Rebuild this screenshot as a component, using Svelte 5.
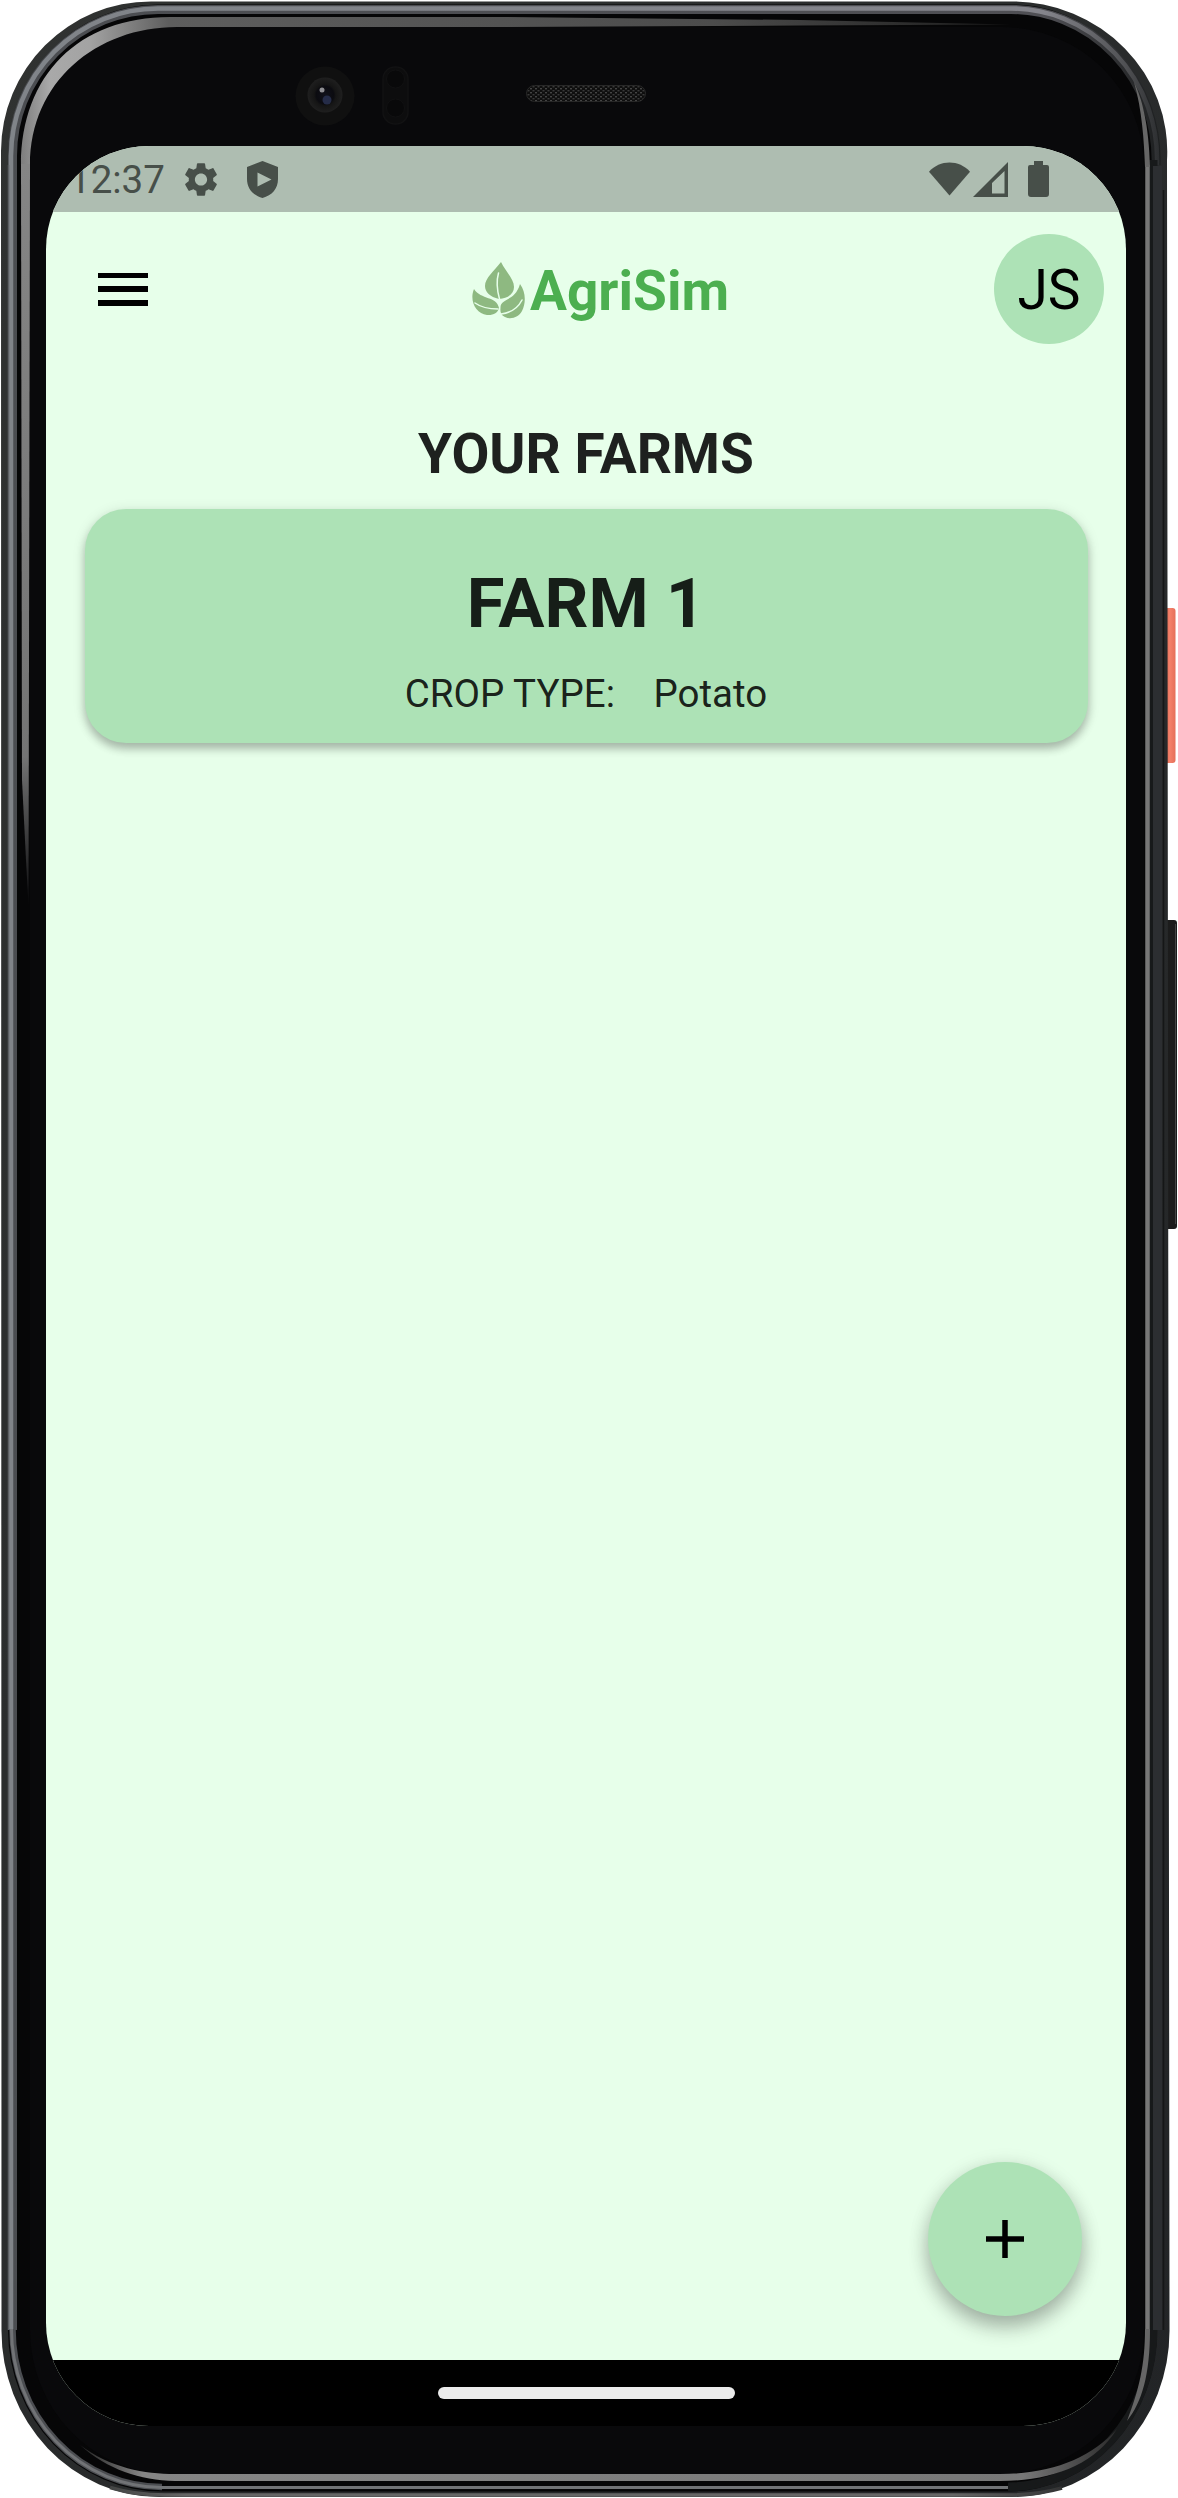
<script>
  const time = '12:37';
  const initials = 'JS';
  const farms = [{ name: 'FARM 1', crop: 'Potato' }];
</script>

<div class="device">
  <!-- Phone body: metal rim, bezel highlights, side buttons, camera and earpiece -->
  <svg class="body" viewBox="0 0 1178 2498" aria-hidden="true">
    <defs>
      <linearGradient id="rim" x1="0" y1="0" x2="1" y2="1">
        <stop offset="0" stop-color="#303231" />
        <stop offset="1" stop-color="#222426" />
      </linearGradient>
      <linearGradient id="silver" gradientUnits="userSpaceOnUse" x1="7" y1="0" x2="1160" y2="0">
        <stop offset="0" stop-color="#808489" />
        <stop offset=".9" stop-color="#84848b" />
        <stop offset=".97" stop-color="#505154" />
        <stop offset="1" stop-color="#2c2e30" />
      </linearGradient>
      <linearGradient id="silverDim" gradientUnits="userSpaceOnUse" x1="7" y1="0" x2="1160" y2="0">
        <stop offset="0" stop-color="#4b4d51" />
        <stop offset=".9" stop-color="#4f4f54" />
        <stop offset="1" stop-color="#1d1f20" />
      </linearGradient>
      <linearGradient id="glint" gradientUnits="userSpaceOnUse" x1="20" y1="0" x2="1010" y2="0">
        <stop offset="0" stop-color="#7c7c7c" />
        <stop offset=".03" stop-color="#a9a9a9" />
        <stop offset=".07" stop-color="#a3a3a3" />
        <stop offset=".15" stop-color="#5e5e5e" />
        <stop offset=".7" stop-color="#4c4c4c" />
        <stop offset="1" stop-color="#1c1c1c" />
      </linearGradient>
      <linearGradient id="glintFade" x1="0" y1="0" x2="0" y2="1">
        <stop offset="0" stop-color="#858585" />
        <stop offset=".8" stop-color="#747474" />
        <stop offset="1" stop-color="#0b0b0d" />
      </linearGradient>
      <linearGradient id="bottomGlint" gradientUnits="userSpaceOnUse" x1="80" y1="0" x2="1128" y2="0">
        <stop offset="0" stop-color="#222" />
        <stop offset=".06" stop-color="#858585" />
        <stop offset=".9" stop-color="#777" />
        <stop offset="1" stop-color="#222" />
      </linearGradient>
      <linearGradient id="base" gradientUnits="userSpaceOnUse" x1="60" y1="0" x2="1110" y2="0">
        <stop offset="0" stop-color="#2c2e2d" />
        <stop offset=".12" stop-color="#666" />
        <stop offset=".85" stop-color="#666" />
        <stop offset="1" stop-color="#1c1d1e" />
      </linearGradient>
      <linearGradient id="power" x1="0" y1="0" x2="1" y2="0">
        <stop offset="0" stop-color="#d9624a" />
        <stop offset=".5" stop-color="#f4816a" />
        <stop offset="1" stop-color="#e5705a" />
      </linearGradient>
      <radialGradient id="lens">
        <stop offset="0" stop-color="#10111a" />
        <stop offset=".5" stop-color="#0b0b10" />
        <stop offset=".62" stop-color="#151515" />
        <stop offset="1" stop-color="#1f1f1f" />
      </radialGradient>
      <pattern id="mesh" width="5" height="4" patternUnits="userSpaceOnUse">
        <rect width="5" height="4" fill="#0e0e0e" />
        <rect x="0" y="0" width="2" height="1.400" fill="#444" />
        <rect x="2.500" y="2" width="2" height="1.400" fill="#393939" />
      </pattern>
    </defs>

    <rect x="1164" y="608" width="11.500" height="155" rx="3" fill="url(#power)" />
    <rect x="1164" y="920" width="13" height="309" rx="3" fill="#1c1c1c" />
    <rect x="1175" y="924" width="1" height="300" fill="#444" />

    <path d="M1 151A150 150 0 0 1 151 1.500H1012A155 150 0 0 1 1167 160L1169.500 2330A158 166 0 0 1 1011 2497H160A158 166 0 0 1 1.500 2330Z" fill="url(#rim)" />
    <path d="M110 2487.500C128 2493 145 2495 165 2495H1008C1030 2495 1048 2492 1062 2488" fill="none" stroke="url(#base)" stroke-width="3.500" />

    <!-- Inner black body, then the brushed band along its left, top and bottom edges -->
    <path d="M8 158A150 154 0 0 1 158 4.500H1008A145 154 0 0 1 1157 165V2330A150 161 0 0 1 1008 2491.500H162A154 162 0 0 1 8 2330Z" fill="#060607" />
    <path d="M12.500 2330V156A146 146 0 0 1 158 9.500H1008A145 150 0 0 1 1156 165" fill="none" stroke="url(#silverDim)" stroke-width="9" />
    <path d="M11 2330V156A147 148 0 0 1 158 8.500H1008A146 151 0 0 1 1157 165" fill="none" stroke="url(#silver)" stroke-width="4.500" />
    <path d="M12.500 2329A149 158 0 0 0 162 2487" fill="none" stroke="#4b4d51" stroke-width="6.500" />
    <path d="M11.500 2329A150.500 158.500 0 0 0 162 2487.500H1008" fill="none" stroke="#717376" stroke-width="3" />
    <path d="M8.500 165V2330" stroke="#5c5f63" stroke-width="1.500" />

    <path d="M1153 160V2330A145 157 0 0 1 1008 2487" fill="none" stroke="#17191a" stroke-width="9" />
    <path d="M1157.500 166V2330" stroke="#2c2e31" stroke-width="9" />
    <path d="M1163.500 190V2330" stroke="#151617" stroke-width="1.500" />

    <path d="M30 160A140 133 0 0 1 170 27H1002A142 140 0 0 1 1144 167V2330A145 144 0 0 1 999 2474H170A140 144 0 0 1 30 2330Z" fill="#09090b" />
    <path d="M21 165C21 75 79 17 170 17H500L800 20L1010 24.500L800 25.500L500 27H177C96 27 30 82 30 165Z" fill="url(#glint)" />
    <path d="M21 164H30L28.500 905L26 860L22 780Z" fill="url(#glintFade)" />
    <path d="M1147.500 165V2330" stroke="#777" stroke-width="4.500" />
    <path d="M1150 167C1149 125 1142 98 1134 82C1142 110 1144 140 1145 167Z" fill="#666" />
    <path d="M1145 2329H1150C1150 2375 1142 2402 1127 2421C1139 2390 1145 2365 1145 2329Z" fill="#666" />
    <path d="M80 2445C110 2468 145 2474 175 2474H1000C1050 2474 1090 2459 1117 2429C1094 2466 1050 2481 1000 2481H175C140 2480 108 2470 80 2445Z" fill="url(#bottomGlint)" />

    <circle cx="325" cy="96" r="29.500" fill="#101010" />
    <circle cx="325" cy="95" r="17.500" fill="url(#lens)" />
    <circle cx="327" cy="100" r="4.500" fill="#252c48" />
    <circle cx="322" cy="90" r="2.500" fill="#8f8f93" />
    <rect x="383" y="67" width="25" height="57" rx="12" fill="#0d0d0e" stroke="#121213" stroke-width="1.500" />
    <circle cx="395.500" cy="79" r="9" fill="#09090a" stroke="#111112" />
    <circle cx="395.500" cy="108" r="9" fill="#09090a" stroke="#111112" />
    <rect x="526.500" y="85.500" width="119" height="16" rx="8" fill="url(#mesh)" stroke="#272727" />
  </svg>

  <main class="screen">
    <div class="status">
      <span class="time">{time}</span>
      <svg class="gear" viewBox="2 2 20 20" aria-hidden="true">
        <path d="M19.140 12.940c.04-.3.060-.61.060-.94 0-.32-.02-.64-.07-.94l2.030-1.580c.18-.14.230-.41.120-.61l-1.920-3.320c-.12-.22-.37-.29-.59-.22l-2.390.96c-.5-.38-1.030-.7-1.620-.94l-.36-2.540c-.04-.24-.24-.41-.48-.41h-3.840c-.24 0-.43.170-.47.410l-.36 2.540c-.59.240-1.130.570-1.620.940l-2.390-.96c-.22-.08-.47 0-.59.220L2.740 8.870c-.12.210-.08.470.120.610l2.030 1.580c-.05.300-.09.630-.09.940s.020.640.070.940l-2.030 1.580c-.18.140-.23.410-.12.610l1.920 3.320c.12.220.37.290.59.220l2.390-.96c.5.380 1.030.700 1.620.940l.36 2.540c.05.240.24.410.48.410h3.840c.24 0 .44-.17.470-.41l.36-2.540c.59-.24 1.130-.56 1.620-.94l2.390.96c.22.080.47 0 .59-.22l1.920-3.320c.12-.22.070-.47-.12-.61l-2.010-1.580zM12 15.600c-1.980 0-3.600-1.620-3.600-3.600s1.620-3.600 3.600-3.600 3.600 1.620 3.600 3.600-1.620 3.600-3.600 3.600z" />
      </svg>
      <svg class="shield" viewBox="0 0 31 37" aria-hidden="true">
        <path fill-rule="evenodd" d="M15.500 0L31 6V18C31 27.500 25 34.500 15.500 37C6 34.500 0 27.500 0 18V6ZM10.500 11.500V25.500L24.500 18.500Z" />
      </svg>
      <span class="spacer"></span>
      <svg class="wifi" viewBox="0 0 42 34" aria-hidden="true">
        <path d="M0 9.500C11-3.200 31-3.200 42 9.500L21 34Z" />
      </svg>
      <svg class="signal" viewBox="0 0 35 35" aria-hidden="true">
        <path fill-rule="evenodd" d="M35 0V35H0ZM31.500 9L19 21V31.500H31.500Z" />
      </svg>
      <svg class="battery" viewBox="0 0 21 36" aria-hidden="true">
        <path d="M6 0H15V4H19Q21 4 21 6V33Q21 36 18 36H3Q0 36 0 33V6Q0 4 2 4H6Z" />
      </svg>
    </div>

    <header>
      <button class="menu" aria-label="Menu"><i></i><i></i><i></i></button>
      <div class="brand">
        <svg viewBox="0 0 53 57" aria-hidden="true">
          <g fill="#8eb981">
            <path d="M29 0C34 10 42 17 42 25C42 32 36 36 27 37C18 35 13 30 13 24C13 16 22 9 29 0Z" />
            <path d="M2 27C9 38 25 34 27 46C26 51 21 53.500 15 53C4 52 -3 39 2 27Z" />
            <path d="M48 22C54 30 54 41 50 49C47 55 39 58 33 55C29 53.500 28 50 28.500 46C28 36 43 40 48 22Z" />
          </g>
          <g fill="none" stroke="#e7ffea" stroke-linecap="round">
            <path d="M26.500 11C24 20 25 28 27.500 37" stroke-width="1.500" />
            <path d="M3 41C10 46 17 47 26 47" stroke-width="1.500" />
            <path d="M50 38C45 48 37 51 29 52" stroke-width="1.500" />
          </g>
        </svg>
        <span>AgriSim</span>
      </div>
      <div class="avatar">{initials}</div>
    </header>

    <section class="content">
      <h1>YOUR FARMS</h1>
      {#each farms as farm}
        <article class="card">
          <h2>{farm.name}</h2>
          <p><span>CROP TYPE:</span><span>{farm.crop}</span></p>
        </article>
      {/each}
    </section>

    <button class="fab" aria-label="Add farm">
      <svg viewBox="0 0 38 38" aria-hidden="true"><path d="M19 0V38M0 19H38" /></svg>
    </button>

    <nav><span class="pill"></span></nav>
  </main>
</div>

<style>
  :global(body) {
    margin: 0;
    background: #fff;
  }
  .device {
    position: relative;
    box-sizing: border-box;
    width: 1178px;
    height: 2498px;
    padding: 146px 52px 72px 46px;
    overflow: hidden;
    font-family: Roboto, sans-serif;
  }
  .body {
    position: absolute;
    inset: 0;
    width: 1178px;
    height: 2498px;
  }
  .screen {
    position: relative;
    display: flex;
    flex-direction: column;
    width: 1080px;
    height: 2280px;
    overflow: hidden;
    border-radius: 103px;
    background: #e7ffea;
  }
  button {
    padding: 0;
    border: 0;
    background: none;
  }
  .status {
    display: flex;
    align-items: center;
    flex: none;
    box-sizing: border-box;
    height: 66px;
    padding: 0 77px 0 23px;
    background: #aebdb1;
    color: #474f49;
  }
  .status svg {
    fill: #474f49;
    flex: none;
  }
  .time {
    width: 115px;
    font-size: 38.500px;
    line-height: 66px;
    padding-top: 2px;
    box-sizing: border-box;
    white-space: nowrap;
  }
  .gear {
    width: 34px;
    height: 35px;
    margin-top: 1px;
  }
  .shield {
    width: 31px;
    height: 37px;
    margin: 1px 0 0 29px;
  }
  .spacer {
    flex: 1;
  }
  .wifi {
    width: 41px;
    height: 34px;
  }
  .signal {
    width: 35px;
    height: 35px;
    margin: 0 20px 0 3px;
  }
  .battery {
    width: 21px;
    height: 36px;
  }
  header {
    display: flex;
    align-items: center;
    flex: none;
    height: 154px;
    padding: 0 22px 0 52px;
  }
  .menu {
    display: flex;
    flex-direction: column;
    gap: 8.250px;
    width: 50px;
  }
  .menu i {
    height: 5.500px;
    background: #000;
  }
  .brand {
    display: flex;
    align-items: center;
    margin-left: 324px;
    color: #4caf50;
    font-size: 55px;
    font-weight: 700;
    line-height: 64px;
  }
  .brand svg {
    width: 53px;
    height: 57px;
    margin: 2px 5px 0 0;
  }
  .brand span {
    padding-top: 3px;
  }
  .avatar {
    width: 110px;
    height: 110px;
    margin-left: auto;
    border-radius: 50%;
    background: #ade2b6;
    color: #000;
    font-size: 55px;
    line-height: 113px;
    text-align: center;
  }
  .content {
    display: flex;
    flex: 1;
    flex-direction: column;
    padding: 56px 38.500px 0;
    color: rgba(0, 0, 0, 0.87);
    text-align: center;
  }
  h1 {
    margin: 0 0 22px;
    font-size: 55px;
    font-weight: 700;
    line-height: 65px;
  }
  .card {
    box-sizing: border-box;
    height: 234px;
    padding-top: 54px;
    border-radius: 41px;
    background: #ade2b6;
    box-shadow: 0 6px 8px rgba(0, 0, 0, 0.23), 0 2px 14px rgba(0, 0, 0, 0.11);
  }
  h2 {
    margin: 0;
    font-size: 68.750px;
    font-weight: 700;
    line-height: 81px;
  }
  .card p {
    display: flex;
    justify-content: center;
    gap: 38.500px;
    margin: 27px 0 0;
    font-size: 38.500px;
    line-height: 46px;
  }
  .fab {
    position: absolute;
    right: 44px;
    bottom: 110px;
    display: grid;
    place-items: center;
    width: 154px;
    height: 154px;
    border-radius: 50%;
    background: #ade2b6;
    box-shadow: 0 12px 20px rgba(0, 0, 0, 0.24), 0 4px 20px rgba(0, 0, 0, 0.13);
  }
  .fab svg {
    width: 38px;
    height: 38px;
  }
  .fab path {
    stroke: #000;
    stroke-width: 5.500;
  }
  nav {
    display: grid;
    place-items: center;
    flex: none;
    height: 66px;
    background: #000;
  }
  .pill {
    width: 297px;
    height: 12px;
    border-radius: 6px;
    background: #ebebeb;
  }
</style>
